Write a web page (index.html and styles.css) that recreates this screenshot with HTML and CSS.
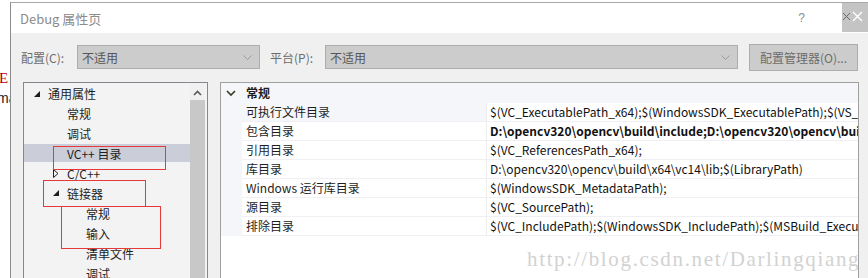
FILE: index.html
```html
<!DOCTYPE html>
<html>
<head>
    <meta charset="UTF-8">
    <title>Debug 属性页</title>
    <link rel="stylesheet" href="styles.css">
</head>
<body>
    <div class="screen">
        <div class="behind">
            <span class="behind-red">E :</span>
            <span class="behind-text">ma</span>
        </div>
        <div class="dialog">
            <div class="titlebar">
                <span class="title">Debug 属性页</span>
                <span class="help">?</span>
                <span class="close">
                    <svg width="26" height="29" viewBox="0 0 26 29">
                        <path d="M1 10 L8 17 M8 10 L1 17" stroke="#6a6a6a" stroke-width="1" fill="none"/>
                        <path d="M11 9 L20 18 M20 9 L11 18" stroke="#ffffff" stroke-width="1.4" fill="none"/>
                    </svg>
                </span>
            </div>
            <div class="toolbar">
                <span class="label">配置(C):</span>
                <div class="combo combo-config">
                    <span>不适用</span>
                    <svg class="combo-arrow" width="9" height="5" viewBox="0 0 9 5"><path d="M0.5 0.5 L4.5 4.5 L8.5 0.5" stroke="#9a9a9a" fill="none"/></svg>
                </div>
                <span class="label label-platform">平台(P):</span>
                <div class="combo combo-platform">
                    <span>不适用</span>
                    <svg class="combo-arrow" width="9" height="5" viewBox="0 0 9 5"><path d="M0.5 0.5 L4.5 4.5 L8.5 0.5" stroke="#9a9a9a" fill="none"/></svg>
                </div>
                <button class="manager-button">配置管理器(O)...</button>
            </div>
            <div class="main">
                <div class="tree">
                    <ul class="tree-list">
                        <li class="tree-item level-0">
                            <svg class="twist" width="7" height="7" viewBox="0 0 7 7"><path d="M6 0 L6 6 L0 6 Z" fill="#1e1e1e"/></svg>
                            通用属性
                        </li>
                        <li class="tree-item level-1">常规</li>
                        <li class="tree-item level-1">调试</li>
                        <li class="tree-item level-1 selected">VC++ 目录</li>
                        <li class="tree-item level-1">
                            <svg class="twist" width="6" height="9" viewBox="0 0 6 9"><path d="M0.5 0.5 L5 4.5 L0.5 8.5 Z" stroke="#1e1e1e" fill="none"/></svg>
                            C/C++
                        </li>
                        <li class="tree-item level-1">
                            <svg class="twist" width="7" height="7" viewBox="0 0 7 7"><path d="M6 0 L6 6 L0 6 Z" fill="#1e1e1e"/></svg>
                            链接器
                        </li>
                        <li class="tree-item level-2">常规</li>
                        <li class="tree-item level-2">输入</li>
                        <li class="tree-item level-2">清单文件</li>
                        <li class="tree-item level-2">调试</li>
                    </ul>
                    <div class="scrollbar">
                        <div class="scroll-up">
                            <svg width="9" height="6" viewBox="0 0 9 6"><path d="M1 5 L4.5 1.5 L8 5" stroke="#5a5a5a" stroke-width="1.6" fill="none"/></svg>
                        </div>
                        <div class="scroll-thumb"></div>
                    </div>
                    <div class="mark mark-vc"></div>
                    <div class="mark mark-linker"></div>
                    <div class="mark mark-input"></div>
                </div>
                <div class="props">
                    <div class="prop-header">
                        <div class="gutter">
                            <svg width="10" height="7" viewBox="0 0 10 7"><path d="M1 1 L5 5 L9 1" stroke="#3d3d2a" stroke-width="1.7" fill="none"/></svg>
                        </div>
                        <div class="prop-title">常规</div>
                    </div>
                    <div class="prop-row first">
                        <div class="gutter"></div>
                        <div class="prop-name">可执行文件目录</div>
                        <div class="prop-value">$(VC_ExecutablePath_x64);$(WindowsSDK_ExecutablePath);$(VS_ExecutablePath);$(MSBuild_ExecutablePath)</div>
                    </div>
                    <div class="prop-row">
                        <div class="gutter"></div>
                        <div class="prop-name">包含目录</div>
                        <div class="prop-value bold">D:\opencv320\opencv\build\include;D:\opencv320\opencv\build\include\opencv</div>
                    </div>
                    <div class="prop-row">
                        <div class="gutter"></div>
                        <div class="prop-name">引用目录</div>
                        <div class="prop-value">$(VC_ReferencesPath_x64);</div>
                    </div>
                    <div class="prop-row">
                        <div class="gutter"></div>
                        <div class="prop-name">库目录</div>
                        <div class="prop-value">D:\opencv320\opencv\build\x64\vc14\lib;$(LibraryPath)</div>
                    </div>
                    <div class="prop-row">
                        <div class="gutter"></div>
                        <div class="prop-name">Windows 运行库目录</div>
                        <div class="prop-value">$(WindowsSDK_MetadataPath);</div>
                    </div>
                    <div class="prop-row">
                        <div class="gutter"></div>
                        <div class="prop-name">源目录</div>
                        <div class="prop-value">$(VC_SourcePath);</div>
                    </div>
                    <div class="prop-row">
                        <div class="gutter"></div>
                        <div class="prop-name">排除目录</div>
                        <div class="prop-value">$(VC_IncludePath);$(WindowsSDK_IncludePath);$(MSBuild_ExecutablePath)</div>
                    </div>
                    <div class="watermark">http://blog.csdn.net/Darlingqiang</div>
                </div>
            </div>
        </div>
    </div>
</body>
</html>
```

FILE: styles.css
```css
body {
    margin: 0;
    background-color: #ffffff;
    font-family: 'Noto Sans CJK SC', 'Noto Sans', sans-serif;
    font-size: 12px;
    color: #1e1e1e;
}

.screen {
    display: flex;
    width: 868px;
    height: 278px;
    overflow: hidden;
}

.behind {
    width: 10px;
    flex-shrink: 0;
    position: relative;
    overflow: hidden;
    background-color: #ffffff;
}

.behind-red {
    position: absolute;
    left: -1px;
    top: 70px;
    color: #c00000;
    font-family: 'Liberation Serif', serif;
    font-size: 15px;
    white-space: nowrap;
}

.behind-text {
    position: absolute;
    left: -3px;
    top: 90px;
    color: #222;
    font-family: 'Liberation Sans', sans-serif;
    font-size: 14px;
}

.dialog {
    flex: 1;
    margin-top: 2px;
    border-top: 1px solid #a8a8a8;
    border-left: 1px solid #8c8c8c;
    background-color: #f0f0f0;
    display: flex;
    flex-direction: column;
}

/* title bar */
.titlebar {
    height: 30px;
    background-color: #ffffff;
    display: flex;
    align-items: center;
    padding-left: 9px;
}

.title {
    flex: 1;
    color: #8c8c8c;
    font-size: 13px;
}

.help {
    color: #8c8c8c;
    font-family: 'Liberation Sans', sans-serif;
    font-size: 12px;
    margin-right: 37px;
}

.close {
    width: 26px;
    height: 29px;
    align-self: flex-start;
    background-color: #c4c4c4;
}

.close svg {
    display: block;
}

/* config row */
.toolbar {
    height: 49px;
    display: flex;
    align-items: center;
    padding-left: 10px;
    box-sizing: border-box;
    padding-bottom: 1px;
}

.label {
    color: #6d6d6d;
    width: 56px;
}

.label-platform {
    width: 55px;
    margin-left: 10px;
}

.combo {
    height: 24px;
    box-sizing: border-box;
    background-color: #cccccc;
    border: 1px solid #adadad;
    display: flex;
    align-items: center;
    padding-left: 4px;
    padding-right: 7px;
    color: #555;
}

.combo span {
    flex: 1;
}

.combo-config {
    width: 183px;
}

.combo-platform {
    width: 413px;
}

.manager-button {
    margin-left: 11px;
    width: 109px;
    height: 27px;
    background-color: #cccccc;
    border: 1px solid #adadad;
    color: #6d6d6d;
    font-family: 'Noto Sans CJK SC', 'Noto Sans', sans-serif;
    font-size: 12px;
    padding: 0;
}

/* main area */
.main {
    flex: 1;
    display: flex;
    padding-left: 12px;
    min-height: 0;
}

.tree {
    width: 185px;
    box-sizing: border-box;
    border: 1px solid #828790;
    border-bottom: none;
    background-color: #f3f3f3;
    display: flex;
    position: relative;
}

.tree-list {
    list-style: none;
    margin: 0;
    padding: 0;
    width: 166px;
}

.tree-item {
    height: 20px;
    display: flex;
    align-items: center;
    white-space: nowrap;
    position: relative;
}

.tree-item .twist {
    position: absolute;
}

.level-0 {
    padding-left: 24px;
}

.level-0 .twist {
    left: 10px;
    top: 8px;
}

.level-1 {
    padding-left: 43px;
}

.level-1 .twist {
    left: 29px;
}

.level-2 {
    padding-left: 62px;
}

.selected {
    background-color: #cbcdd8;
    height: 18px;
    margin: 1px 0;
}

.scrollbar {
    width: 15px;
    margin-left: 0;
    background-color: #f0f0f0;
    display: flex;
    flex-direction: column;
}

.scroll-up {
    height: 17px;
    display: flex;
    align-items: center;
    justify-content: center;
}

.scroll-up svg {
    margin-top: 2px;
}

.scroll-thumb {
    flex: 1;
    background-color: #c8c8c8;
}

/* red annotation boxes */
.mark {
    position: absolute;
    border: 1.5px solid #e8393a;
    box-sizing: border-box;
}

.mark-vc {
    left: 29px;
    top: 63px;
    width: 113px;
    height: 24px;
}

.mark-linker {
    left: 19px;
    top: 97px;
    width: 103px;
    height: 27px;
}

.mark-input {
    left: 37px;
    top: 123px;
    width: 100px;
    height: 43px;
}

/* property grid */
.props {
    margin-left: 12px;
    width: 639px;
    box-sizing: border-box;
    border: 1px solid #a0a0a0;
    border-bottom: none;
    background-color: #ffffff;
    position: relative;
    overflow: hidden;
}

.prop-header {
    height: 20px;
    display: flex;
    background-color: #f5f6fa;
}

.prop-header .gutter {
    display: flex;
    align-items: center;
    padding-left: 5px;
    box-sizing: border-box;
}

.gutter {
    width: 21px;
    flex-shrink: 0;
    background-color: #f5f6fa;
}

.prop-title {
    font-weight: bold;
    padding-left: 4px;
    line-height: 20px;
}

.prop-row {
    height: 19px;
    display: flex;
    white-space: nowrap;
}

.prop-name {
    width: 245px;
    flex-shrink: 0;
    box-sizing: border-box;
    padding-left: 4px;
    border-bottom: 1px solid #f0f0f4;
    border-right: 1px solid #ededed;
    line-height: 18px;
}

.first .prop-name {
    background-color: #f5f6fa;
}

.prop-value {
    flex: 1;
    overflow: hidden;
    box-sizing: border-box;
    padding-left: 3px;
    border-bottom: 1px solid #f0f0f4;
    line-height: 18px;
    color: #111;
}

.bold {
    font-weight: bold;
}

.watermark {
    position: absolute;
    left: 306px;
    top: 164px;
    color: #d2d2d2;
    font-family: 'Liberation Serif', serif;
    font-size: 21px;
    letter-spacing: 1.65px;
    white-space: nowrap;
}
```
